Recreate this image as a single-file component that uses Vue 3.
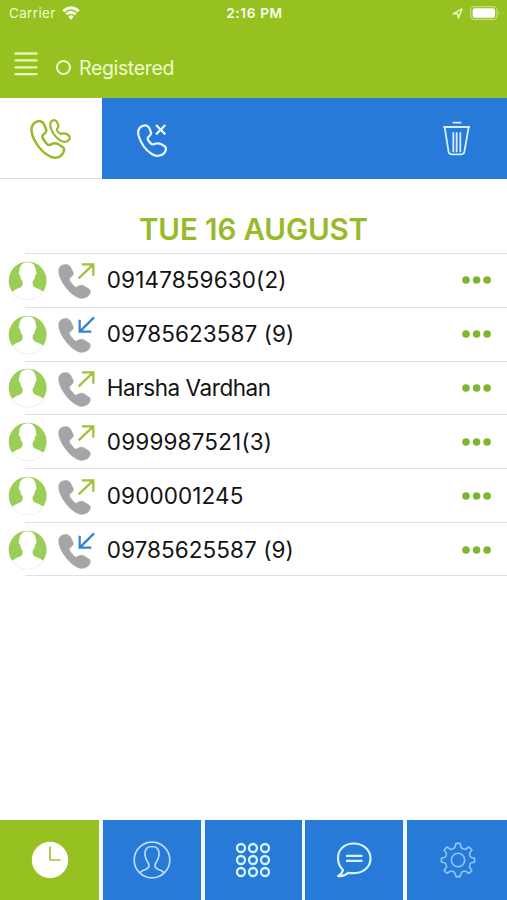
<script setup>
const calls = [
  { label: '09147859630(2)', incoming: false, spacing: 0.13 },
  { label: '09785623587 (9)', incoming: true, spacing: 0.08 },
  { label: 'Harsha Vardhan', incoming: false, spacing: -0.45 },
  { label: '0999987521(3)', incoming: false, spacing: 0.16 },
  { label: '0900001245', incoming: false, spacing: 0.1 },
  { label: '09785625587 (9)', incoming: true, spacing: 0.06 },
]
const keys = [0, 1, 2].flatMap((r) => [0, 1, 2].map((c) => ({ x: 6 + c * 12, y: 6 + r * 12 })))
</script>

<template>
  <main class="phone">
    <header class="top">
      <div class="status">
        <div class="side">
          <span class="carrier">Carrier</span>
          <svg class="wifi" viewBox="0 0 54 42">
            <path d="M1 13Q27-11 53 13L47 19Q27 1 7 19ZM10 22Q27 7 44 22L38 28Q27 19 16 28ZM19 32Q27 24 35 32L27 41Z" fill="#fbfff0" />
          </svg>
        </div>
        <span class="time">2:16 PM</span>
        <div class="side right">
          <svg class="location" viewBox="0 0 34 34"><path d="M3 18 31 3 20 31 17 18Z" fill="none" stroke="#e9f7bd" stroke-width="4.5" stroke-linejoin="round" /></svg>
          <svg class="battery" viewBox="0 0 90 42">
            <rect x="2" y="2" width="79" height="38" rx="11" fill="none" stroke="#c3df78" stroke-width="3.5" />
            <rect x="8" y="7" width="67" height="28" rx="6" fill="#fff" />
            <path d="M85 15Q91 21 85 27Z" fill="#c3df78" />
          </svg>
        </div>
      </div>
      <div class="account">
        <svg class="menu" viewBox="0 0 24 24"><path d="M1.5 1.5H22.5M1.5 8.4H22.5M1.5 15.3H22.5M1.5 22.2H22.5" stroke="#e9f8b6" stroke-width="2.3" stroke-linecap="round" /></svg>
        <i class="dot"></i>
        <span class="registered">Registered</span>
      </div>
    </header>

    <nav class="filters">
      <button class="filter active" aria-label="All calls">
        <svg class="all" viewBox="87 65 130 130" fill="none" stroke="#98b82a" stroke-linejoin="round">
          <path stroke-width="7.5" d="M110 79C119 75 128 78 132 87L138 101C141 108 137 113 131 117C126 120 127 126 130 132L140 145C144 150 149 150 154 147C162 143 168 143 174 146L188 155C194 159 192 169 187 177C179 187 166 189 153 185C135 177 116 158 103 134C94 118 92 99 98 89C101 83 105 81 110 79Z" />
          <path stroke-width="6.5" d="M157 76C163 73 170 75 172 82L175 90C177 96 173 98 171 101C169 105 175 112 180 115C184 117 187 114 192 114C198 114 206 119 209 124C212 131 204 139 195 140C181 140 162 123 154 103C149 89 150 80 157 76Z" />
        </svg>
      </button>
      <button class="filter" aria-label="Missed calls">
        <svg class="missed" viewBox="405 85 95 110" fill="none" stroke="#e3f6ff" stroke-width="6.8" stroke-linejoin="round">
          <path d="M424 97C433 93 441 96 445 104L450 116C452 122 448 125 443 129C437 133 441 141 449 149C455 155 458 153 464 150C470 148 475 149 481 152L491 158C497 163 495 171 489 179C479 189 463 188 451 180C434 169 420 149 413 127C409 112 413 102 424 97Z" />
          <path d="M465 94 493 122M493 94 465 122" />
        </svg>
      </button>
      <button class="filter delete" aria-label="Delete">
        <svg class="trash" viewBox="124 78 88 105" fill="none" stroke="#d5edff" stroke-width="5.4" stroke-linejoin="round">
          <path d="M156 83H182M128 96H208M132 97 144 171Q146 178 154 178H181Q189 178 191 171L204 97M158 112V172M168 112V172M179 112V172" />
        </svg>
      </button>
    </nav>

    <section class="history">
      <h1><span>TUE 16 AUGUST</span></h1>
      <ul>
        <li v-for="call in calls" :key="call.label">
          <svg class="avatar" viewBox="23 166 118 118">
            <circle cx="82" cy="225" r="57" fill="#9bce56" />
            <path d="M35 259Q44 251 54 248C65 244 68 240 67 228Q60 221 59 209C54 205 55 200 57 197C57 180 68 170 82 170S107 180 107 197C109 200 110 205 105 209Q104 221 97 228C96 240 99 244 110 248Q120 251 130 259A57 57 0 0 1 35 259Z" fill="#fff" />
            <path d="M34 257A57.5 57.5 0 0 0 131 257" fill="none" stroke="#dfe9d2" stroke-width="2" />
          </svg>
          <svg class="handset" viewBox="168 165 126 120">
            <path d="M188 180C199 176 208 179 212 187L219 201C222 208 219 212 212 217C207 221 208 225 211 230L222 243C226 248 229 247 235 243C241 240 246 240 251 242L266 251C272 255 272 261 269 267C264 277 253 281 241 280C226 277 208 262 195 244C183 227 176 212 176 198C176 189 180 183 188 180Z" fill="#a5a5a5" stroke="#a5a5a5" stroke-width="1.5" />
            <path v-if="call.incoming" d="M282 175 240 217M239 182V218H274" fill="none" stroke="#3483d6" stroke-width="6.8" />
            <path v-else d="M236 220 279 179M246 178H280V212" fill="none" stroke="#9fc13b" stroke-width="6.8" />
          </svg>
          <span class="label" :style="{ letterSpacing: call.spacing + 'px' }">{{ call.label }}</span>
          <svg class="more" viewBox="0 0 30 8" fill="#7db72e"><circle cx="4" cy="4" r="3.8" /><circle cx="14.6" cy="4" r="3.8" /><circle cx="25.1" cy="4" r="3.8" /></svg>
        </li>
      </ul>
    </section>

    <nav class="bottom">
      <button class="active" aria-label="Recent calls">
        <svg class="nav-icon" viewBox="0 0 38 38"><circle cx="19" cy="19" r="18.2" fill="#fff" /><path d="M19 5.5V19H29.5" fill="none" stroke="#a5bf43" stroke-width="1.7" /></svg>
      </button>
      <button aria-label="Contacts">
        <svg class="nav-icon" viewBox="0 0 38 38" fill="none" stroke="#b5ddff" stroke-width="1.7"><circle cx="19" cy="19" r="17.8" /><path d="M7 32Q8 30 12.5 28.5Q16 27 16 24.5Q16 22.5 13.5 19Q11.5 15 12 11Q13 5.5 19 5.5T26 11Q26.5 15 24.5 19Q22 22.5 22 24.5Q22 27 25.5 28.5Q30 30 31 32" /></svg>
      </button>
      <button aria-label="Keypad">
        <svg class="nav-icon keypad" viewBox="0 0 36 36" fill="none" stroke="#d5f2ff" stroke-width="2.3"><circle v-for="key in keys" :key="`${key.x}-${key.y}`" :cx="key.x" :cy="key.y" r="4" /></svg>
      </button>
      <button aria-label="Messages">
        <svg class="nav-icon" viewBox="0 0 38 38" fill="none" stroke="#d5f2ff" stroke-width="2.2" stroke-linejoin="round"><path d="M18.5 2.5C9 2.5 3 9 3 17C3 22 5 26 8 29Q7 33 3 35Q9 36 13 31.8Q15 32.2 18.5 32.2C28.5 32.2 35.5 26 35.5 17.5S28.5 2.5 18.5 2.5ZM11 14.8H27.5M11 19.8H27.5" /></svg>
      </button>
      <button aria-label="Settings">
        <svg class="nav-icon gear" viewBox="0 0 38 38" fill="none" stroke="#8fc6f6" stroke-width="1.6" stroke-linejoin="round"><circle cx="19" cy="19" r="6.7" /><path d="M17 2.4H21L22 6.2Q22.5 7.2 24.5 8Q26 8.7 27 8L30 6L33 9L31 11.5Q30 13 31 15Q31.5 16.5 33 16.8L35.6 17.3V21L32.5 21.8Q31.5 22 31 23.5Q30 25.5 31 27L33 29.5L30 32.3L27 30.5Q26 29.7 24.5 30.3Q22.5 31 22.2 32.2L21 35.6H17L16 32.2Q15.5 31 13.5 30.3Q12 29.7 11 30.5L8 32.3L5 29.5L7 27Q8 25.5 7 23.5Q6.5 22 5.5 21.8L2.4 21V17.3L5.5 16.5Q6.5 16.2 7 15Q8 13 7 11.5L5 9L8 6L11 8Q12 8.7 13.5 8Q15.5 7.2 16 6.2Z" /></svg>
      </button>
    </nav>
  </main>
</template>

<style>
body { margin: 0; }
</style>

<style scoped>
* { box-sizing: border-box; }
svg { display: block; flex: none; }
button { border: 0; padding: 0; background: #277ad7; }
.phone { width: 507px; height: 900px; display: flex; flex-direction: column; overflow: hidden; background: #fff; font-family: Inter, "Liberation Sans", sans-serif; }
.top { flex: none; height: 98px; background: #97c120; color: #f0fad0; }
.status { height: 26px; display: grid; grid-template-columns: 1fr auto 1fr; align-items: center; padding: 0 7px 0 9px; font-size: 13px; }
.side { display: flex; align-items: center; gap: 6px; }
.right { justify-content: flex-end; gap: 7px; }
.carrier { letter-spacing: .4px; font-size: 13.4px; }
.time { font-weight: 600; font-size: 13.6px; letter-spacing: .65px; color: #fbfff0; }
.wifi { width: 18px; height: 14px; }
.location { width: 11px; height: 11px; }
.battery { width: 30px; height: 14px; }
.account { display: flex; align-items: center; height: 72px; padding: 11px 0 0 14px; }
.menu { width: 24px; height: 24px; margin-top: -7px; }
.dot { width: 15px; height: 15px; border: 2.4px solid #effaca; border-radius: 50%; margin-left: 18px; }
.registered { margin-left: 8px; font-size: 19.5px; line-height: 24px; letter-spacing: -.35px; }
.filters { flex: none; display: flex; height: 81px; background: #277ad7; }
.filter { width: 101px; display: flex; align-items: center; justify-content: center; }
.filter.active { width: 102px; background: #fff; border-bottom: 1px solid #dedede; }
.all { width: 43.3px; height: 43.3px; margin-top: 1px; }
.missed { width: 31.7px; height: 36.7px; margin: 4px 0 0 -2px; }
.delete { margin-left: auto; }
.trash { width: 29.3px; height: 35px; margin-top: 0; }
.history { flex: 1; padding-top: 29px; }
h1 { margin: 0; height: 45px; text-align: center; font-size: 29.5px; line-height: 43px; font-weight: 600; letter-spacing: -.1px; color: #98b92a; }
ul { list-style: none; margin: 0; padding: 0; }
li { height: 53.8px; display: flex; align-items: center; padding: 1px 16px 0 8px; background: linear-gradient(#e0e0e2, #e0e0e2) 25px 0 / 482px 1px no-repeat; }
li:last-child { height: 54.5px; background: linear-gradient(#e0e0e2, #e0e0e2) 25px 0 / 482px 1px no-repeat, linear-gradient(#e0e0e2, #e0e0e2) 25px 100% / 482px 1px no-repeat; }
.avatar { width: 39.3px; height: 39.3px; }
.handset { width: 42px; height: 40px; margin-left: 9px; }
.label { margin-left: 8.5px; font-size: 22.5px; line-height: 30px; color: #131313; white-space: pre; }
.more { width: 30px; height: 8px; margin-left: auto; margin-right: -1px; }
.bottom { flex: none; height: 80px; display: grid; grid-template-columns: 99px 98px 97px 98px 100px; column-gap: 3.75px; background: #eff8ff; }
.bottom button { display: flex; align-items: center; justify-content: center; }
.bottom .active { background: #97c120; }
.nav-icon { width: 38px; height: 38px; }
.keypad { width: 36px; height: 36px; }
.gear { margin-left: 1px; }
</style>
